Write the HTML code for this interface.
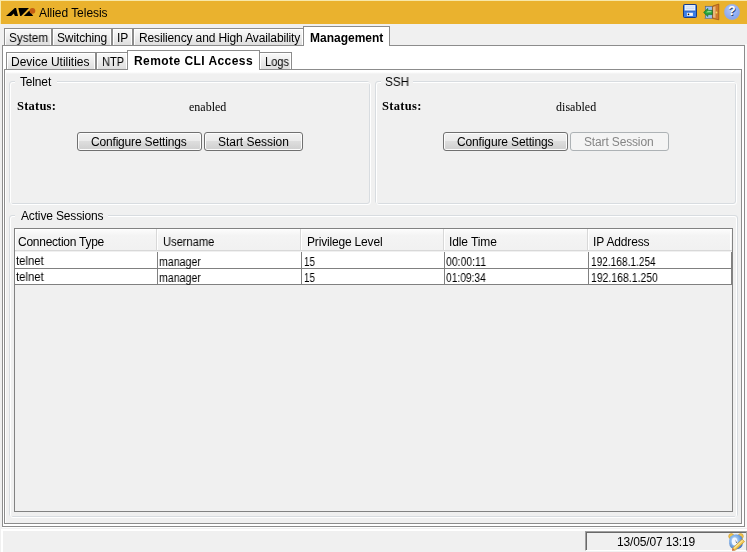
<!DOCTYPE html>
<html><head><meta charset="utf-8">
<style>
*{margin:0;padding:0;box-sizing:border-box}
html,body{width:747px;height:552px;overflow:hidden;background:#f0f0f0;font-family:"Liberation Sans",sans-serif;font-size:12px;color:#000;position:relative}
.a{position:absolute}
.t{position:absolute;white-space:nowrap;line-height:14px;will-change:transform}
.tab{position:absolute;height:17px;border:1px solid #8c8c8c;border-bottom:none;background:linear-gradient(#fafafa,#f0f0f0 40%,#dedede);box-shadow:inset 1px 1px 0 #fff,inset -1px 0 0 #fff}
.tab.sel{background:#fff;box-shadow:none;height:20px}
.grp{position:absolute;border:1px solid #d8dce0;border-radius:3px}
.grw{position:absolute;border:1px solid #fff;border-radius:3px}
.cap{position:absolute;background:#f0f0f0;height:14px}
.btn{position:absolute;height:19px;border:1px solid #707070;border-radius:3px;background:linear-gradient(#f2f2f2,#ebebeb 45%,#dddddd 50%,#cfcfcf);box-shadow:inset 0 0 0 1px #fcfcfc}
.btn.dis{border-color:#adb2b5;background:#f4f4f4;box-shadow:none}
.sep{position:absolute;top:229px;width:2px;height:21px;background:#d8d8d8;border-right:1px solid #fff}
.hl{position:absolute;height:1px;background:#808080}
.vl{position:absolute;width:1px;background:#808080}
</style></head><body>

<!-- title bar -->
<div class="a" style="left:0;top:0;width:747px;height:24px;background:#eab22e"></div>
<div class="a" style="left:0;top:0;width:747px;height:1px;background:#f8e8a8"></div>
<div class="a" style="left:0;top:0;width:1px;height:24px;background:#f8e8a8"></div>
<svg class="a" style="left:0;top:0" width="40" height="20" viewBox="0 0 40 20">
  <path d="M6 16 L14.8 8 L16.1 8 L18 16 L14.9 16 L13.8 13.4 L11.2 16 Z" fill="#000"/>
  <path d="M18.3 8 L29 8 L21.2 16 L20.2 16 Z" fill="#000"/>
  <path d="M23.8 16 L29.4 10.4 L33.2 16 Z" fill="#000"/>
  <circle cx="32.4" cy="10.8" r="2.9" fill="#c45e12"/>
</svg>
<svg class="a" style="left:680px;top:1px" width="22" height="22" viewBox="0 0 22 22">
  <rect x="3.5" y="3.5" width="13" height="13" rx="1" fill="#3a7ee6" stroke="#1b3c86" stroke-width="1"/>
  <rect x="4.7" y="4.1" width="10.5" height="5.6" fill="#f6faff"/>
  <rect x="5.5" y="5.6" width="9" height="0.7" fill="#a9c2e8"/>
  <rect x="5.5" y="7.5" width="9" height="0.7" fill="#a9c2e8"/>
  <rect x="4.5" y="9.7" width="11" height="0.8" fill="#2a5fb8"/>
  <rect x="6.9" y="11.8" width="6" height="3.1" fill="#f4f6fa"/>
  <circle cx="8.5" cy="13.4" r="0.8" fill="#111"/>
</svg>
<svg class="a" style="left:700px;top:2px" width="20" height="20" viewBox="0 0 20 20">
  <rect x="5.3" y="4.3" width="7" height="12" fill="#9cc0ee" stroke="#55657a" stroke-width="0.7"/>
  <rect x="4.5" y="16" width="8" height="0.8" fill="#888"/>
  <path d="M12.7 4 L18.8 2 L18.8 17.8 L12.7 16.5 Z" fill="#d27a2a" stroke="#8a4512" stroke-width="0.6"/>
  <path d="M13 5 L15.5 4.2 L15.5 16 L13 15.5 Z" fill="#e9b57a"/>
  <circle cx="16.5" cy="10.5" r="0.9" fill="#f6e060"/>
  <path d="M3.6 10.4 L7.8 6.4 L7.8 8.4 L12.3 8.4 L12.3 12.6 L7.8 12.6 L7.8 14.5 Z" fill="#27a33a" stroke="#0f6a1a" stroke-width="0.6"/>
  <path d="M6 10.4 L8 8.8 L11.5 9.2 L11.5 10.2 Z" fill="#8ee08e"/>
</svg>
<svg class="a" style="left:721px;top:2px" width="20" height="20" viewBox="0 0 20 20">
  <defs><radialGradient id="hg" cx="0.45" cy="0.35" r="0.75"><stop offset="0" stop-color="#b4c8fa"/><stop offset="1" stop-color="#7c9cec"/></radialGradient></defs>
  <circle cx="11" cy="10" r="7.7" fill="url(#hg)" stroke="#98aee0" stroke-width="0.5"/>
  <text x="11.7" y="13.6" text-anchor="middle" font-family="Liberation Sans" font-weight="bold" font-size="12" fill="#27406e">?</text>
  <text x="11" y="13" text-anchor="middle" font-family="Liberation Sans" font-weight="bold" font-size="12" fill="#fff">?</text>
</svg>


<!-- top tabs -->
<div class="tab" style="left:4px;top:28px;width:48px"></div>
<div class="tab" style="left:52px;top:28px;width:60px"></div>
<div class="tab" style="left:112px;top:28px;width:21px"></div>
<div class="tab" style="left:133px;top:28px;width:171px"></div>
<!-- main panel -->
<div class="a" style="left:2px;top:45px;width:743px;height:482px;background:#fff;border:1px solid #8c8c8c"></div>
<div class="tab sel" style="left:303px;top:26px;width:87px"></div>
<!-- sub tabs -->
<div class="tab" style="left:6px;top:52px;width:90px"></div>
<div class="tab" style="left:96px;top:52px;width:32px"></div>
<div class="tab" style="left:259px;top:52px;width:33px"></div>
<div class="a" style="left:4px;top:69px;width:738px;height:455px;background:linear-gradient(#fff,#fff 2px,#f0f0f0 4px);border:1px solid #8c8c8c;box-shadow:inset 1px 1px 0 #fff"></div>
<div class="tab sel" style="left:127px;top:50px;width:133px"></div>
<!-- groups -->
<div class="grp" style="left:9px;top:81px;width:361px;height:123px"></div><div class="grw" style="left:10px;top:82px;width:361px;height:123px"></div>
<div class="cap" style="left:15px;top:75px;width:42px"></div>
<div class="grp" style="left:375px;top:81px;width:361px;height:123px"></div><div class="grw" style="left:376px;top:82px;width:361px;height:123px"></div>
<div class="cap" style="left:381px;top:75px;width:32px"></div>
<div class="btn" style="left:77px;top:132px;width:125px"></div>
<div class="btn" style="left:204px;top:132px;width:99px"></div>
<div class="btn" style="left:443px;top:132px;width:125px"></div>
<div class="btn dis" style="left:570px;top:132px;width:99px"></div>
<div class="grp" style="left:9px;top:215px;width:729px;height:302px"></div><div class="grw" style="left:10px;top:216px;width:727px;height:302px"></div>
<div class="cap" style="left:15px;top:209px;width:93px"></div>
<!-- table -->
<div class="a" style="left:14px;top:228px;width:719px;height:284px;background:#f0f0f0;border:1px solid #828282"></div>
<div class="a" style="left:15px;top:229px;width:717px;height:22px;background:linear-gradient(#fdfdfd,#f4f4f4 30%,#f1f1f1);border-bottom:1px solid #d8d8d8;box-shadow:inset 1px 1px 0 #fff"></div>
<div class="sep" style="left:156px"></div>
<div class="sep" style="left:300px"></div>
<div class="sep" style="left:443px"></div>
<div class="sep" style="left:587px"></div>
<div class="a" style="left:730px;top:229px;width:1px;height:21px;background:#fff"></div>
<div class="a" style="left:15px;top:252px;width:717px;height:32px;background:#fff"></div>
<div class="hl" style="left:15px;top:268px;width:717px"></div>
<div class="hl" style="left:15px;top:284px;width:717px"></div>
<div class="vl" style="left:157px;top:252px;height:33px"></div>
<div class="vl" style="left:301px;top:252px;height:33px"></div>
<div class="vl" style="left:444px;top:252px;height:33px"></div>
<div class="vl" style="left:588px;top:252px;height:33px"></div>
<div class="vl" style="left:731px;top:252px;height:33px"></div>
<!-- status bar -->
<div class="a" style="left:2px;top:527px;width:744px;height:1px;background:#fff"></div>
<div class="a" style="left:745px;top:44px;width:2px;height:484px;background:#fafafa"></div>
<div class="a" style="left:1px;top:529px;width:746px;height:23px;border-top:2px solid #fff;border-left:2px solid #fff"></div>
<div class="a" style="left:585px;top:531px;width:162px;height:20px;border-top:1px solid #a0a0a0;border-left:1px solid #a0a0a0;box-shadow:inset 1px 1px 0 #696969;border-bottom:1px solid #fff;border-right:1px solid #a0a0a0"></div>
<svg class="a" style="left:727px;top:532px" width="19" height="19" viewBox="0 0 19 19">
  <defs><radialGradient id="cg" cx="0.4" cy="0.4" r="0.7"><stop offset="0" stop-color="#d8ecff"/><stop offset="0.5" stop-color="#7fb0e8"/><stop offset="1" stop-color="#3a68b8"/></radialGradient></defs>
  <circle cx="4.3" cy="4.2" r="2.6" fill="#f2c44a" stroke="#c8922a" stroke-width="0.6"/>
  <circle cx="13.7" cy="4.2" r="2.6" fill="#f2c44a" stroke="#c8922a" stroke-width="0.6"/>
  <rect x="2.2" y="2.6" width="13.6" height="14.6" rx="6" fill="url(#cg)"/>
  <ellipse cx="7.6" cy="9.6" rx="2.8" ry="4" fill="#f4f8ff"/>
  <path d="M8.5 7.5 L10 11 L9 11 Z" fill="#556"/>
  <path d="M5.5 16.2 L15.2 7.2 L17.6 9.6 L8 18.4 Z" fill="#f3c64c" stroke="#c8962a" stroke-width="0.6"/>
  <path d="M6.5 16 L15.2 8 L16 8.8 L7.3 16.8 Z" fill="#fbe8a0"/>
  <path d="M5.5 16.2 L8 18.4 L5 18.8 Z" fill="#c85a20"/>
</svg>

<div class="t" style="left:39.20px;top:6.00px;font-family:'Liberation Sans',sans-serif;font-size:12px;letter-spacing:-0.043px;">Allied Telesis</div>
<div class="t" style="left:8.90px;top:31.00px;font-family:'Liberation Sans',sans-serif;font-size:12px;transform:scaleX(0.9793);transform-origin:0 0;">System</div>
<div class="t" style="left:56.50px;top:31.00px;font-family:'Liberation Sans',sans-serif;font-size:12px;letter-spacing:-0.133px;">Switching</div>
<div class="t" style="left:116.50px;top:31.00px;font-family:'Liberation Sans',sans-serif;font-size:12px;">IP</div>
<div class="t" style="left:138.60px;top:31.00px;font-family:'Liberation Sans',sans-serif;font-size:12px;letter-spacing:-0.127px;">Resiliency and High Availability</div>
<div class="t" style="left:309.60px;top:31.00px;font-family:'Liberation Sans',sans-serif;font-size:12px;font-weight:bold;">Management</div>
<div class="t" style="left:11.20px;top:55.00px;font-family:'Liberation Sans',sans-serif;font-size:12px;letter-spacing:-0.015px;">Device Utilities</div>
<div class="t" style="left:101.90px;top:55.00px;font-family:'Liberation Sans',sans-serif;font-size:12px;transform:scaleX(0.9189);transform-origin:0 0;">NTP</div>
<div class="t" style="left:134.00px;top:54.00px;font-family:'Liberation Sans',sans-serif;font-size:12px;font-weight:bold;letter-spacing:0.438px;">Remote CLI Access</div>
<div class="t" style="left:264.90px;top:55.00px;font-family:'Liberation Sans',sans-serif;font-size:12px;transform:scaleX(0.9257);transform-origin:0 0;">Logs</div>
<div class="t" style="left:20.30px;top:75.00px;font-family:'Liberation Sans',sans-serif;font-size:12px;letter-spacing:-0.160px;">Telnet</div>
<div class="t" style="left:384.90px;top:75.00px;font-family:'Liberation Sans',sans-serif;font-size:12px;transform:scaleX(0.9754);transform-origin:0 0;">SSH</div>
<div class="t" style="left:16.80px;top:99.00px;font-family:'Liberation Serif',serif;font-size:12.5px;font-weight:bold;letter-spacing:0.215px;">Status:</div>
<div class="t" style="left:189.00px;top:100.00px;font-family:'Liberation Serif',serif;font-size:12px;">enabled</div>
<div class="t" style="left:382.20px;top:99.00px;font-family:'Liberation Serif',serif;font-size:12.5px;font-weight:bold;letter-spacing:0.317px;">Status:</div>
<div class="t" style="left:555.80px;top:100.00px;font-family:'Liberation Serif',serif;font-size:12px;letter-spacing:0.034px;">disabled</div>
<div class="t" style="left:90.60px;top:135.00px;font-family:'Liberation Sans',sans-serif;font-size:12px;letter-spacing:-0.178px;">Configure Settings</div>
<div class="t" style="left:217.80px;top:135.00px;font-family:'Liberation Sans',sans-serif;font-size:12px;letter-spacing:-0.037px;">Start Session</div>
<div class="t" style="left:456.90px;top:135.00px;font-family:'Liberation Sans',sans-serif;font-size:12px;letter-spacing:-0.132px;">Configure Settings</div>
<div class="t" style="left:583.90px;top:135.00px;font-family:'Liberation Sans',sans-serif;font-size:12px;color:#858585;letter-spacing:-0.148px;">Start Session</div>
<div class="t" style="left:20.90px;top:209.00px;font-family:'Liberation Sans',sans-serif;font-size:12px;letter-spacing:-0.156px;">Active Sessions</div>
<div class="t" style="left:18.20px;top:235.00px;font-family:'Liberation Sans',sans-serif;font-size:12px;letter-spacing:-0.254px;">Connection Type</div>
<div class="t" style="left:162.90px;top:235.00px;font-family:'Liberation Sans',sans-serif;font-size:12px;transform:scaleX(0.9262);transform-origin:0 0;">Username</div>
<div class="t" style="left:306.60px;top:235.00px;font-family:'Liberation Sans',sans-serif;font-size:12px;letter-spacing:-0.174px;">Privilege Level</div>
<div class="t" style="left:449.00px;top:235.00px;font-family:'Liberation Sans',sans-serif;font-size:12px;letter-spacing:-0.100px;">Idle Time</div>
<div class="t" style="left:593.00px;top:235.00px;font-family:'Liberation Sans',sans-serif;font-size:12px;letter-spacing:-0.138px;">IP Address</div>
<div class="t" style="left:16.00px;top:254.00px;font-family:'Liberation Sans',sans-serif;font-size:12px;transform:scaleX(0.9462);transform-origin:0 0;">telnet</div>
<div class="t" style="left:159.30px;top:255.00px;font-family:'Liberation Sans',sans-serif;font-size:12px;transform:scaleX(0.8832);transform-origin:0 0;">manager</div>
<div class="t" style="left:303.90px;top:255.00px;font-family:'Liberation Sans',sans-serif;font-size:12px;transform:scaleX(0.8104);transform-origin:0 0;">15</div>
<div class="t" style="left:445.90px;top:255.00px;font-family:'Liberation Sans',sans-serif;font-size:12px;transform:scaleX(0.8730);transform-origin:0 0;">00:00:11</div>
<div class="t" style="left:590.80px;top:255.00px;font-family:'Liberation Sans',sans-serif;font-size:12px;transform:scaleX(0.8431);transform-origin:0 0;">192.168.1.254</div>
<div class="t" style="left:16.00px;top:270.00px;font-family:'Liberation Sans',sans-serif;font-size:12px;transform:scaleX(0.9462);transform-origin:0 0;">telnet</div>
<div class="t" style="left:159.30px;top:271.00px;font-family:'Liberation Sans',sans-serif;font-size:12px;transform:scaleX(0.8832);transform-origin:0 0;">manager</div>
<div class="t" style="left:303.90px;top:271.00px;font-family:'Liberation Sans',sans-serif;font-size:12px;transform:scaleX(0.8104);transform-origin:0 0;">15</div>
<div class="t" style="left:445.90px;top:271.00px;font-family:'Liberation Sans',sans-serif;font-size:12px;transform:scaleX(0.8536);transform-origin:0 0;">01:09:34</div>
<div class="t" style="left:590.80px;top:271.00px;font-family:'Liberation Sans',sans-serif;font-size:12px;transform:scaleX(0.8711);transform-origin:0 0;">192.168.1.250</div>
<div class="t" style="left:617.20px;top:535.00px;font-family:'Liberation Sans',sans-serif;font-size:12px;letter-spacing:-0.154px;">13/05/07 13:19</div>
</body></html>
